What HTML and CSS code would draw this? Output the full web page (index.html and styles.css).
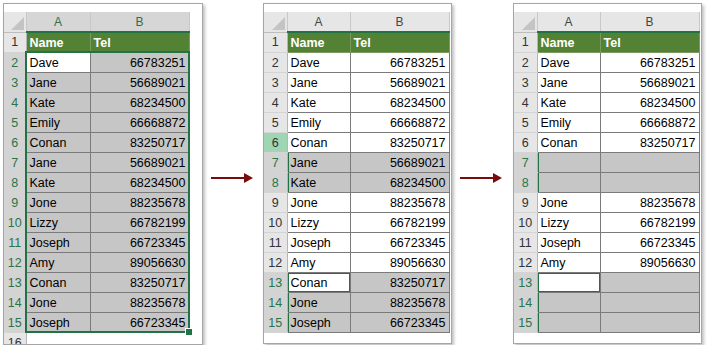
FILE: index.html
```html
<!DOCTYPE html>
<html lang="en">
<head>
    <meta charset="UTF-8">
    <title>Delete Rows Steps</title>
    <link rel="stylesheet" href="styles.css">
</head>
<body>

    <!-- Step 1: original selection -->
    <div class="sheet sheet-first">
        <table class="grid">
            <colgroup><col class="c-rh"><col class="c-a1"><col class="c-b"><col class="c-pad"></colgroup>
            <tr class="colhead"><th class="corner"></th><th class="sel-col">A</th><th class="sel-col">B</th><th class="blank"></th></tr>
            <tr><th class="rh">1</th><td class="hd">Name</td><td class="hd">Tel</td><td class="blank"></td></tr>
            <tr><th class="rh on">2</th><td class="active">Dave</td><td class="num gray">66783251</td><td class="blank"></td></tr>
            <tr><th class="rh on">3</th><td class="gray">Jane</td><td class="num gray">56689021</td><td class="blank"></td></tr>
            <tr><th class="rh on">4</th><td class="gray">Kate</td><td class="num gray">68234500</td><td class="blank"></td></tr>
            <tr><th class="rh on">5</th><td class="gray">Emily</td><td class="num gray">66668872</td><td class="blank"></td></tr>
            <tr><th class="rh on">6</th><td class="gray">Conan</td><td class="num gray">83250717</td><td class="blank"></td></tr>
            <tr><th class="rh on">7</th><td class="gray">Jane</td><td class="num gray">56689021</td><td class="blank"></td></tr>
            <tr><th class="rh on">8</th><td class="gray">Kate</td><td class="num gray">68234500</td><td class="blank"></td></tr>
            <tr><th class="rh on">9</th><td class="gray">Jone</td><td class="num gray">88235678</td><td class="blank"></td></tr>
            <tr><th class="rh on">10</th><td class="gray">Lizzy</td><td class="num gray">66782199</td><td class="blank"></td></tr>
            <tr><th class="rh on">11</th><td class="gray">Joseph</td><td class="num gray">66723345</td><td class="blank"></td></tr>
            <tr><th class="rh on">12</th><td class="gray">Amy</td><td class="num gray">89056630</td><td class="blank"></td></tr>
            <tr><th class="rh on">13</th><td class="gray">Conan</td><td class="num gray">83250717</td><td class="blank"></td></tr>
            <tr><th class="rh on">14</th><td class="gray">Jone</td><td class="num gray">88235678</td><td class="blank"></td></tr>
            <tr><th class="rh on">15</th><td class="gray">Joseph</td><td class="num gray">66723345</td><td class="blank"></td></tr>
            <tr><th class="rh">16</th><td class="blank"></td><td class="blank"></td><td class="blank"></td></tr>
        </table>
        <div class="range"><span class="handle"></span></div>
    </div>

    <div class="arrow">
        <svg width="42" height="10" viewBox="0 0 42 10"><rect x="0" y="4" width="35" height="2" fill="#7b0a0a"/><polygon points="33,0 42,5 33,10" fill="#7b0a0a"/></svg>
    </div>

    <!-- Step 2: duplicates selected -->
    <div class="sheet">
        <table class="grid">
            <colgroup><col class="c-rh2"><col class="c-a"><col class="c-b"></colgroup>
            <tr class="colhead"><th class="corner"></th><th>A</th><th>B</th></tr>
            <tr><th class="rh">1</th><td class="hd">Name</td><td class="hd">Tel</td></tr>
            <tr><th class="rh">2</th><td>Dave</td><td class="num">66783251</td></tr>
            <tr><th class="rh">3</th><td>Jane</td><td class="num">56689021</td></tr>
            <tr><th class="rh">4</th><td>Kate</td><td class="num">68234500</td></tr>
            <tr><th class="rh">5</th><td>Emily</td><td class="num">66668872</td></tr>
            <tr><th class="rh hover">6</th><td>Conan</td><td class="num">83250717</td></tr>
            <tr><th class="rh on">7</th><td class="gray edge">Jane</td><td class="num gray">56689021</td></tr>
            <tr><th class="rh on">8</th><td class="gray edge">Kate</td><td class="num gray">68234500</td></tr>
            <tr><th class="rh">9</th><td>Jone</td><td class="num">88235678</td></tr>
            <tr><th class="rh">10</th><td>Lizzy</td><td class="num">66782199</td></tr>
            <tr><th class="rh">11</th><td>Joseph</td><td class="num">66723345</td></tr>
            <tr><th class="rh">12</th><td>Amy</td><td class="num">89056630</td></tr>
            <tr><th class="rh on">13</th><td class="cursor edge">Conan</td><td class="num gray">83250717</td></tr>
            <tr><th class="rh on">14</th><td class="gray edge">Jone</td><td class="num gray">88235678</td></tr>
            <tr><th class="rh on">15</th><td class="gray edge">Joseph</td><td class="num gray">66723345</td></tr>
        </table>
    </div>

    <div class="arrow">
        <svg width="42" height="10" viewBox="0 0 42 10"><rect x="0" y="4" width="35" height="2" fill="#7b0a0a"/><polygon points="33,0 42,5 33,10" fill="#7b0a0a"/></svg>
    </div>

    <!-- Step 3: contents cleared -->
    <div class="sheet">
        <table class="grid">
            <colgroup><col class="c-rh2"><col class="c-a"><col class="c-b"></colgroup>
            <tr class="colhead"><th class="corner"></th><th>A</th><th>B</th></tr>
            <tr><th class="rh">1</th><td class="hd">Name</td><td class="hd">Tel</td></tr>
            <tr><th class="rh">2</th><td>Dave</td><td class="num">66783251</td></tr>
            <tr><th class="rh">3</th><td>Jane</td><td class="num">56689021</td></tr>
            <tr><th class="rh">4</th><td>Kate</td><td class="num">68234500</td></tr>
            <tr><th class="rh">5</th><td>Emily</td><td class="num">66668872</td></tr>
            <tr><th class="rh">6</th><td>Conan</td><td class="num">83250717</td></tr>
            <tr><th class="rh on">7</th><td class="gray edge"></td><td class="gray"></td></tr>
            <tr><th class="rh on">8</th><td class="gray edge"></td><td class="gray"></td></tr>
            <tr><th class="rh">9</th><td>Jone</td><td class="num">88235678</td></tr>
            <tr><th class="rh">10</th><td>Lizzy</td><td class="num">66782199</td></tr>
            <tr><th class="rh">11</th><td>Joseph</td><td class="num">66723345</td></tr>
            <tr><th class="rh">12</th><td>Amy</td><td class="num">89056630</td></tr>
            <tr><th class="rh on">13</th><td class="cursor edge"></td><td class="gray"></td></tr>
            <tr><th class="rh on">14</th><td class="gray edge"></td><td class="gray"></td></tr>
            <tr><th class="rh on">15</th><td class="gray edge"></td><td class="gray"></td></tr>
        </table>
    </div>

</body>
</html>
```

FILE: styles.css
```css
/* Page */
body {
    margin: 0;
    padding: 3px 0 0 3px;
    background: #ffffff;
    font-family: 'Liberation Sans', Arial, sans-serif;
    display: flex;
    align-items: flex-start;
}

/* Sheet frame */
.sheet {
    position: relative;
    width: 187px;
    height: 331px;
    padding-top: 8px;
    border: 1px solid #a6a6a6;
    background: #ffffff;
    box-shadow: 2px 2px 3px rgba(0, 0, 0, 0.25);
    overflow: hidden;
}

.sheet-first {
    width: 198px;
    height: 332px;
}

/* Arrows between steps */
.arrow {
    width: 60px;
    padding: 170px 0 0 8px;
    box-sizing: border-box;
}

.arrow svg {
    display: block;
}

.sheet + .arrow + .sheet + .arrow {
    width: 61px;
    padding-left: 8px;
}

/* Grid */
.grid {
    border-collapse: collapse;
    table-layout: fixed;
    font-size: 12.5px;
    color: #000;
}

.c-rh { width: 22px; }
.c-rh2 { width: 23px; }
.c-a1 { width: 64px; }
.c-a { width: 63px; }
.c-b { width: 99px; }
.c-pad { width: 12px; }

.grid tr {
    height: 20px;
}

.grid td {
    padding: 0 3px;
    height: 19px;
    line-height: 18px;
    border: 1px solid #7a7a7a;
    white-space: nowrap;
    overflow: hidden;
}

.grid td.num {
    text-align: right;
}

/* Column header row */
.colhead th {
    height: 18px;
    background: #e6e6e6;
    color: #444;
    font-weight: normal;
    font-size: 12px;
    border-left: 1px solid #c8c8c8;
    border-right: 1px solid #c8c8c8;
    border-bottom: 2px solid #217346;
    padding: 0;
}

.colhead th.corner {
    position: relative;
    border-bottom: 1px solid #bdbdbd;
    border-left: none;
}

.colhead th.corner::after {
    content: "";
    position: absolute;
    right: 2px;
    bottom: 2px;
    border-left: 13px solid transparent;
    border-bottom: 13px solid #c4c4c4;
}

.colhead th.sel-col {
    background: #d6d6d6;
    color: #2f6e48;
}

.colhead th.blank {
    background: #ffffff;
    border: none;
}

/* Row headers */
.rh {
    background: #e6e6e6;
    color: #333;
    font-weight: normal;
    font-size: 12.5px;
    text-align: center;
    padding: 0;
    border-top: 1px solid #d4d4d4;
    border-bottom: 1px solid #d4d4d4;
    border-right: 1px solid #b5b5b5;
}

.rh.on {
    background: #d3d3d3;
    color: #2b7449;
}

.rh.hover {
    background: #9fd5b3;
}

/* Cells */
.grid td.hd {
    background: #548235;
    color: #ffffff;
    font-weight: bold;
    border-color: #7a9a62;
}

.grid td.gray {
    background: #c6c6c6;
}

.grid td.active {
    background: #ffffff;
}

.grid td.edge {
    border-left-color: #217346;
    box-shadow: inset 1px 0 0 #217346;
}

.grid td.cursor {
    background: #ffffff;
    box-shadow: inset 0 0 0 1px #217346;
}

.grid td.blank,
.grid th.blank {
    background: #ffffff;
    border: none;
}

/* Selection range overlay on the first sheet */
.range {
    position: absolute;
    left: 21px;
    top: 47px;
    width: 165px;
    height: 282px;
    border: 2px solid #217346;
    box-sizing: border-box;
}

.handle {
    position: absolute;
    right: -5px;
    bottom: -5px;
    width: 6px;
    height: 6px;
    background: #217346;
    border: 1px solid #ffffff;
}
```
